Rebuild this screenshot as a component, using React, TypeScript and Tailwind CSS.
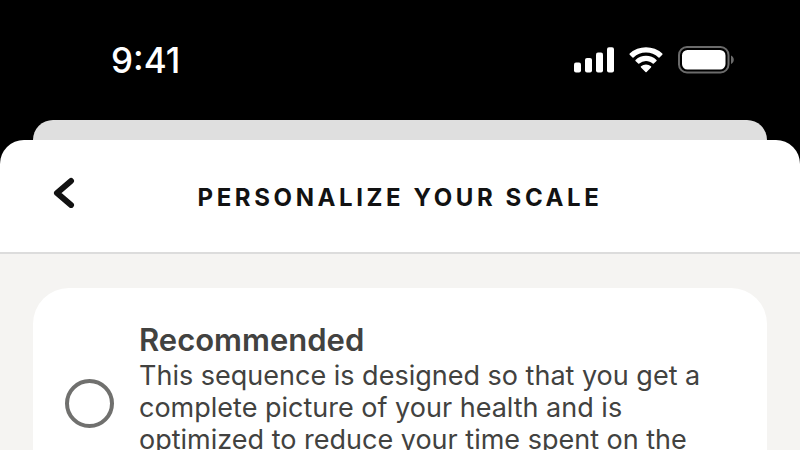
function StatusBar() {
  return (
    <div className="flex h-[120px] items-center justify-between pr-[66px] pl-[111px] text-white">
      <time className="text-[35px] leading-10 font-medium">9:41</time>
      <div className="flex items-center gap-[14px]">
        <svg className="h-[26px] w-10" viewBox="0 0 40 26" fill="currentColor" aria-label="Signal">
          <rect x="0" y="15.5" width="7" height="10" rx="2" />
          <rect x="11" y="11" width="7" height="14.5" rx="2" />
          <rect x="22" y="5.5" width="7" height="20" rx="2" />
          <rect x="33" y="0.3" width="7" height="25.2" rx="2" />
        </svg>
        <svg className="h-[26px] w-[36px]" viewBox="0 0 36 26" fill="currentColor" aria-label="Wi-Fi">
          <path d="M18 5.500c4.700 0 9.100 1.800 12.500 5 .3.300.7.300 1 0l2.800-2.800c.3-.3.300-.8 0-1.100A24 24 0 0 0 1.700 6.600c-.3.300-.3.800 0 1.100l2.800 2.800c.3.300.7.300 1 0A18 18 0 0 1 18 5.500z" />
          <path d="M18 14c2.500 0 4.900 1 6.700 2.600.3.300.8.300 1.100 0l2.700-2.600c.3-.3.300-.8 0-1.100a15.700 15.700 0 0 0-21 0c-.3.300-.3.800 0 1.100l2.700 2.600c.3.300.8.300 1.100 0A10 10 0 0 1 18 14z" />
          <path d="M23 19.300c.4.300.4.800 0 1.200l-4.400 4.600c-.3.300-.8.300-1.100 0L13 20.500c-.4-.4-.4-.9 0-1.200a7.700 7.700 0 0 1 10 0z" />
        </svg>
        <svg className="h-7 w-14" viewBox="0 0 56 28" aria-label="Battery">
          <rect x="1" y="1" width="49.500" height="25.500" rx="8" fill="none" stroke="#6b6b6b" strokeWidth="2" />
          <rect x="4" y="4" width="43.500" height="19.500" rx="5.500" fill="white" />
          <path d="M53 9.500v8.500c1.800-.8 2.800-2.400 2.800-4.200s-1-3.500-2.800-4.300z" fill="#6b6b6b" />
        </svg>
      </div>
    </div>
  );
}

function Header() {
  return (
    <header className="grid h-[114px] grid-cols-[80px_1fr_80px] items-center border-b-2 border-[#dcdcdc]">
      <button type="button" aria-label="Back" className="flex h-14 items-center justify-end pr-1 pb-2">
        <svg className="h-8 w-6" viewBox="0 0 24 32" fill="none" stroke="#121212" strokeWidth="6" strokeLinecap="round" strokeLinejoin="round">
          <path d="M19 5 5 17 19 29" />
        </svg>
      </button>
      <h1 className="pt-1 text-center text-2xl font-bold tracking-[0.15em] whitespace-nowrap text-[#121212] uppercase">
        Personalize your scale
      </h1>
    </header>
  );
}

function OptionCard() {
  return (
    <label className="flex gap-[25px] rounded-t-[36px] bg-white px-8 pt-8 text-[#424240]">
      <input
        type="radio"
        name="sequence"
        className="mt-[59px] size-[49px] shrink-0 appearance-none rounded-full border-4 border-[#70706e]"
      />
      <span className="block min-w-0">
        <span className="block text-[31px] leading-10 font-semibold">Recommended</span>
        <span className="block text-[27px] leading-8">
          This sequence is designed so that you get a
          <br />
          complete picture of your health and is
          <br />
          optimized to reduce your time spent on the
        </span>
      </span>
    </label>
  );
}

export default function App() {
  return (
    <div className="h-screen overflow-hidden bg-black font-['Inter',sans-serif]">
      <StatusBar />
      <div className="mx-[33px] h-5 rounded-t-[20px] bg-[#dfdfdf]" />
      <div className="min-h-screen overflow-hidden rounded-t-[24px] bg-white">
        <Header />
        <main className="min-h-screen bg-[#f5f4f2] px-[33px] pt-[34px]">
          <OptionCard />
        </main>
      </div>
    </div>
  );
}
